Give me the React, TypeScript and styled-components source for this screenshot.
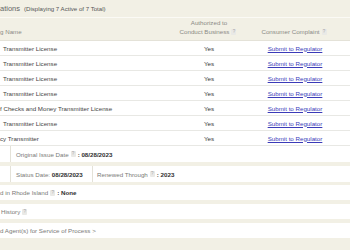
import React from "react"
import styled, { createGlobalStyle } from "styled-components"

const GlobalStyle = createGlobalStyle`
    html, body {
        margin: 0;
        padding: 0;
        background: #f2f0e5;
        font-family: "Liberation Sans", Arial, Helvetica, sans-serif;
        overflow: hidden;
    }
`

const Page = styled.div`
    width: 350px;
    height: 250px;
    overflow: hidden;
    background: #f2f0e5;
    color: #555;
`

const TitleBar = styled.div`
    height: 17px;
    display: flex;
    align-items: center;
    gap: 4px;
    border-bottom: 1px solid #fbfaf5;
`

const Title = styled.span`
    font-size: 7.5px;
    color: #666;
`

const Count = styled.span`
    font-size: 6.1px;
    color: #555;
`

const Grid = styled.div`
    display: grid;
    grid-template-columns: 178px 62px 110px;
`

const HeaderRow = styled(Grid)`
    height: 23px;
    align-items: end;
    padding-bottom: 4px;
    box-sizing: border-box;
    border-bottom: 1px solid #e4e2d8;
`

const HeadCell = styled.div<{ $left?: boolean }>`
    font-size: 6.2px;
    line-height: 9px;
    color: #8a8a86;
    text-align: ${p => (p.$left ? "left" : "center")};
`

const Row = styled(Grid)`
    height: 15px;
    align-items: center;
    background: #fff;
    border-bottom: 1px solid #e8e8e4;
    box-sizing: border-box;
    font-size: 6.2px;
`

const Name = styled.div<{ $indent?: number }>`
    color: #444;
    padding-left: ${p => p.$indent ?? 3}px;
    white-space: nowrap;
    overflow: hidden;
`

const Yes = styled.div`
    text-align: center;
    color: #333;
`

const LinkCell = styled.div`
    text-align: center;
`

const Link = styled.a`
    color: #3b3bb8;
    text-decoration: underline;
`

const Help = styled.span`
    display: inline-block;
    width: 5px;
    height: 6px;
    margin: 0 2px;
    background: #e9e9e6;
    border-radius: 1px;
    color: #a8a8a8;
    font-size: 4.5px;
    line-height: 6px;
    text-align: center;
    vertical-align: middle;
`

const Details = styled.div`
    display: flex;
    flex-direction: column;
`

const DetailRow = styled.div<{ $h: number; $gap: number }>`
    height: ${p => p.$h}px;
    margin-top: ${p => p.$gap}px;
    background: #fff;
    display: flex;
    align-items: stretch;
    font-size: 6.2px;
`

const Spacer = styled.div`
    width: 10px;
    border-right: 1px solid #e4e2d8;
    flex: none;
`

const Cell = styled.div<{ $w?: number; $pad?: number }>`
    display: flex;
    align-items: center;
    padding-left: ${p => p.$pad ?? 5}px;
    ${p => (p.$w ? `width: ${p.$w}px; flex: none; border-right: 1px solid #e4e2d8;` : "flex: 1;")}
    box-sizing: border-box;
    white-space: nowrap;
`

const Label = styled.span`
    color: #7a7a78;
`

const Value = styled.span`
    color: #2e2e2e;
    font-weight: bold;
`

const licenses = [
    { name: "Transmitter License" },
    { name: "Transmitter License" },
    { name: "Transmitter License" },
    { name: "Transmitter License" },
    { name: "f Checks and Money Transmitter License", indent: -1 },
    { name: "Transmitter License" },
    { name: "cy Transmitter", indent: 0 },
]

export default function App() {
    return (
        <Page>
            <GlobalStyle />
            <TitleBar>
                <Title>ations</Title>
                <Count>(Displaying 7 Active of 7 Total)</Count>
            </TitleBar>
            <HeaderRow>
                <HeadCell $left>g Name</HeadCell>
                <HeadCell>
                    Authorized to
                    <br />
                    Conduct Business<Help>?</Help>
                </HeadCell>
                <HeadCell>
                    Consumer Complaint<Help>?</Help>
                </HeadCell>
            </HeaderRow>
            {licenses.map((l, i) => (
                <Row key={i}>
                    <Name $indent={l.indent}>{l.name}</Name>
                    <Yes>Yes</Yes>
                    <LinkCell>
                        <Link href="#">Submit to Regulator</Link>
                    </LinkCell>
                </Row>
            ))}
            <Details>
                <DetailRow $h={16} $gap={0}>
                    <Spacer />
                    <Cell>
                        <Label>Original Issue Date</Label>
                        <Help>?</Help>
                        <Value>: 08/28/2023</Value>
                    </Cell>
                </DetailRow>
                <DetailRow $h={16} $gap={4}>
                    <Spacer />
                    <Cell $w={82}>
                        <Label>Status Date:&nbsp;</Label>
                        <Value>08/28/2023</Value>
                    </Cell>
                    <Cell $pad={4}>
                        <Label>Renewed Through</Label>
                        <Help>?</Help>
                        <Value>: 2023</Value>
                    </Cell>
                </DetailRow>
                <DetailRow $h={15} $gap={3}>
                    <Cell $pad={0}>
                        <Label>d in Rhode Island</Label>
                        <Help>?</Help>
                        <Value>: None</Value>
                    </Cell>
                </DetailRow>
                <DetailRow $h={15} $gap={4}>
                    <Cell $pad={1}>
                        <Label>History</Label>
                        <Help>?</Help>
                    </Cell>
                </DetailRow>
                <DetailRow $h={15} $gap={4}>
                    <Cell $pad={0}>
                        <Label>d Agent(s) for Service of Process &gt;</Label>
                    </Cell>
                </DetailRow>
            </Details>
        </Page>
    )
}
